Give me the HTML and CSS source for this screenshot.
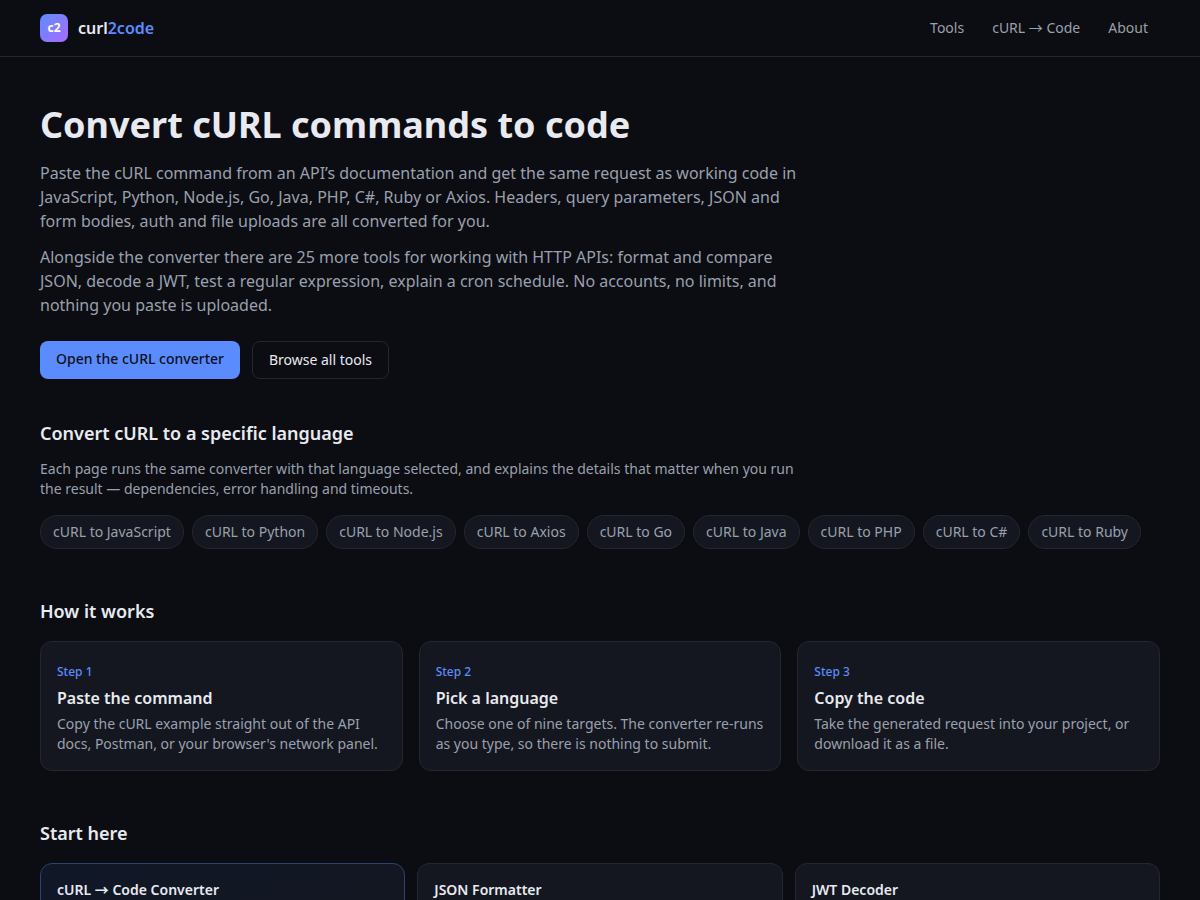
FILE: index.html
```html
<!DOCTYPE html>
<html lang="en">
<head>
<meta charset="utf-8">
<meta name="viewport" content="width=device-width, initial-scale=1">
<title>curl2code</title>
<link rel="stylesheet" href="styles.css">
</head>
<body>
<header class="site-header">
  <div class="container header-inner">
    <a class="brand" href="#"><span class="brand-mark">c2</span><span class="brand-name">curl<span class="accent">2code</span></span></a>
    <nav class="nav">
      <a href="#tools">Tools</a>
      <a href="#curl">cURL → Code</a>
      <a href="#about">About</a>
    </nav>
  </div>
</header>
<main class="container">
  <section class="hero">
    <h1>Convert cURL commands to code</h1>
    <p>Paste the cURL command from an API’s documentation and get the same request as working code in JavaScript, Python, Node.js, Go, Java, PHP, C#, Ruby or Axios. Headers, query parameters, JSON and form bodies, auth and file uploads are all converted for you.</p>
    <p>Alongside the converter there are 25 more tools for working with HTTP APIs: format and compare JSON, decode a JWT, test a regular expression, explain a cron schedule. No accounts, no limits, and nothing you paste is uploaded.</p>
    <div class="actions">
      <a class="button primary" href="#curl">Open the cURL converter</a>
      <a class="button" href="#tools">Browse all tools</a>
    </div>
  </section>
  <section class="languages">
    <h2>Convert cURL to a specific language</h2>
    <p class="section-text">Each page runs the same converter with that language selected, and explains the details that matter when you run the result — dependencies, error handling and timeouts.</p>
    <div class="chips">
      <a href="#">cURL to JavaScript</a>
      <a href="#">cURL to Python</a>
      <a href="#">cURL to Node.js</a>
      <a href="#">cURL to Axios</a>
      <a href="#">cURL to Go</a>
      <a href="#">cURL to Java</a>
      <a href="#">cURL to PHP</a>
      <a href="#">cURL to C#</a>
      <a href="#">cURL to Ruby</a>
    </div>
  </section>
  <section>
    <h2>How it works</h2>
    <ol class="grid steps">
      <li class="card step"><p class="step-label">Step 1</p><h3>Paste the command</h3><p>Copy the cURL example straight out of the API docs, Postman, or your browser's network panel.</p></li>
      <li class="card step"><p class="step-label">Step 2</p><h3>Pick a language</h3><p>Choose one of nine targets. The converter re-runs as you type, so there is nothing to submit.</p></li>
      <li class="card step"><p class="step-label">Step 3</p><h3>Copy the code</h3><p>Take the generated request into your project, or download it as a file.</p></li>
    </ol>
  </section>
  <section id="tools">
    <h2>Start here</h2>
    <div class="grid tools">
      <a class="card tool featured" href="#curl">cURL → Code Converter</a>
      <a class="card tool" href="#">JSON Formatter</a>
      <a class="card tool" href="#">JWT Decoder</a>
    </div>
  </section>
</main>
</body>
</html>
```
FILE: styles.css
```css
:root {
  --bg: #0b0d12;
  --card: #14171f;
  --border: #24272f;
  --text: #e8eaf0;
  --muted: #9aa0ae;
  --accent: #5b8cff;
}
* { box-sizing: border-box; }
body {
  margin: 0;
  background: var(--bg);
  color: var(--text);
  font: 16px/24px "Noto Sans", "Noto Sans CJK JP", sans-serif;
}
a { color: inherit; text-decoration: none; }
h1, h2, h3, p { margin: 0; }
.container { max-width: 1200px; margin: 0 auto; padding: 0 40px; }
.site-header { border-bottom: 1px solid var(--border); }
.header-inner { display: flex; align-items: center; justify-content: space-between; height: 56px; }
.brand { display: flex; align-items: center; gap: 10px; font-weight: 600; }
.brand-mark {
  display: grid; place-items: center; width: 28px; height: 28px; border-radius: 7px;
  background: linear-gradient(135deg, #5b8cff, #a96bff); color: #fff;
  font-size: 12px; font-weight: 700;
}
.accent { color: var(--accent); }
.nav { display: flex; gap: 28px; padding-right: 12px; color: var(--muted); font-size: 14px; }
.hero { display: flex; flex-direction: column; gap: 12px; max-width: 760px; padding-top: 44px; }
h1 { font-size: 36px; line-height: 48px; font-weight: 700; }
.hero p { color: var(--muted); }
.actions { display: flex; gap: 12px; margin-top: 12px; }
.button {
  padding: 8px 16px; border: 1px solid var(--border); border-radius: 8px;
  font-size: 14px; line-height: 20px;
}
.primary { background: var(--accent); border: 0; color: #0b1020; font-weight: 500; }
section + section { margin-top: 48px; }
.hero + .languages { margin-top: 40px; }
h2 { margin-bottom: 16px; font-size: 18px; line-height: 28px; font-weight: 600; }
.languages h2 { margin-bottom: 12px; }
.section-text { max-width: 760px; color: var(--muted); font-size: 14px; line-height: 20px; }
.chips { display: flex; flex-wrap: wrap; gap: 8px; margin-top: 16px; }
.chips a {
  padding: 6px 12px; border: 1px solid var(--border); border-radius: 17px;
  background: var(--card); color: var(--muted); font-size: 14px; line-height: 20px;
}
.grid { display: grid; grid-template-columns: repeat(3, 1fr); margin: 0; padding: 0; list-style: none; }
.steps { gap: 16px; }
.tools { gap: 12px; }
.card { padding: 16px; border: 1px solid var(--border); border-radius: 12px; background: var(--card); }
.step { color: var(--muted); font-size: 14px; line-height: 20px; }
.step-label { margin: 4px 0; color: var(--accent); font-size: 12px; font-weight: 500; }
h3 { margin-bottom: 4px; color: var(--text); font-size: 16px; line-height: 24px; font-weight: 600; }
.tool { min-height: 110px; font-size: 14px; line-height: 20px; font-weight: 600; }
.featured { border-color: #2d4172; background: linear-gradient(160deg, #101727, var(--card)); }
```
